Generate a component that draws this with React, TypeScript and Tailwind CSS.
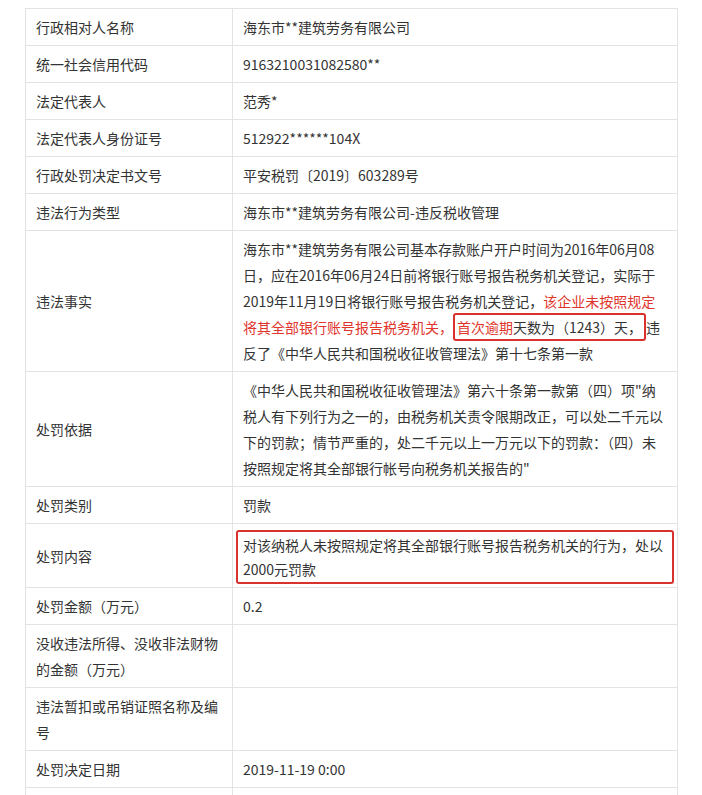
const rows: { label: React.ReactNode; value: React.ReactNode }[] = [
  { label: '行政相对人名称', value: '海东市**建筑劳务有限公司' },
  { label: '统一社会信用代码', value: '9163210031082580**' },
  { label: '法定代表人', value: '范秀*' },
  { label: '法定代表人身份证号', value: '512922******104X' },
  { label: '行政处罚决定书文号', value: '平安税罚〔2019〕603289号' },
  { label: '违法行为类型', value: '海东市**建筑劳务有限公司-违反税收管理' },
  {
    label: '违法事实',
    value: (
      <>
        海东市**建筑劳务有限公司基本存款账户开户时间为2016年06月08
        <br />
        日，应在2016年06月24日前将银行账号报告税务机关登记，实际于
        <br />
        2019年11月19日将银行账号报告税务机关登记，
        <span className="text-[#e0352c]">该企业未按照规定</span>
        <br />
        <span className="text-[#e0352c]">将其全部银行账号报告税务机关，</span>
        <span className="border-2 border-[#d9312b] rounded-[3px] py-[2px] px-[2px]">
          <span className="text-[#e0352c]">首次逾期</span>天数为（1243）天，
        </span>
        违
        <br />
        反了《中华人民共和国税收征收管理法》第十七条第一款
      </>
    ),
  },
  {
    label: '处罚依据',
    value: (
      <>
        《中华人民共和国税收征收管理法》第六十条第一款第（四）项"纳
        <br />
        税人有下列行为之一的，由税务机关责令限期改正，可以处二千元以
        <br />
        下的罚款；情节严重的，处二千元以上一万元以下的罚款：（四）未
        <br />
        按照规定将其全部银行帐号向税务机关报告的"
      </>
    ),
  },
  { label: '处罚类别', value: '罚款' },
  { label: '处罚内容', value: null },
  { label: '处罚金额（万元）', value: '0.2' },
  {
    label: (
      <>
        没收违法所得、没收非法财物
        <br />
        的金额（万元）
      </>
    ),
    value: '',
  },
  {
    label: (
      <>
        违法暂扣或吊销证照名称及编
        <br />号
      </>
    ),
    value: '',
  },
  { label: '处罚决定日期', value: '2019-11-19 0:00' },
  { label: '', value: '' },
];

export default function App() {
  return (
    <div
      className="bg-white min-h-screen pt-[8px] pl-[25px] text-[14px] text-[#333333]"
      style={{ fontFamily: '"Noto Sans CJK SC", "Noto Sans", sans-serif' }}
    >
      <table className="border-collapse w-[652px] table-fixed">
        <colgroup>
          <col className="w-[207px]" />
          <col className="w-[445px]" />
        </colgroup>
        <tbody>
          {rows.map((row, i) => (
            <tr key={i}>
              <td className="border border-[#e3e3e3] align-middle py-[5px] px-[10px] leading-[26px] whitespace-nowrap">
                {row.label}
              </td>
              {row.value === null ? (
                <td className="border border-[#e3e3e3] pt-[6px] pb-[3px] px-[3px]">
                  <div className="border-2 border-[#d9312b] rounded-[3px] px-[5px] py-[1px] leading-[24px]">
                    对该纳税人未按照规定将其全部银行账号报告税务机关的行为，处以
                    <br />
                    2000元罚款
                  </div>
                </td>
              ) : (
                <td className="border border-[#e3e3e3] align-middle py-[5px] px-[10px] leading-[26px] whitespace-nowrap">
                  {row.value}
                </td>
              )}
            </tr>
          ))}
        </tbody>
      </table>
    </div>
  );
}
